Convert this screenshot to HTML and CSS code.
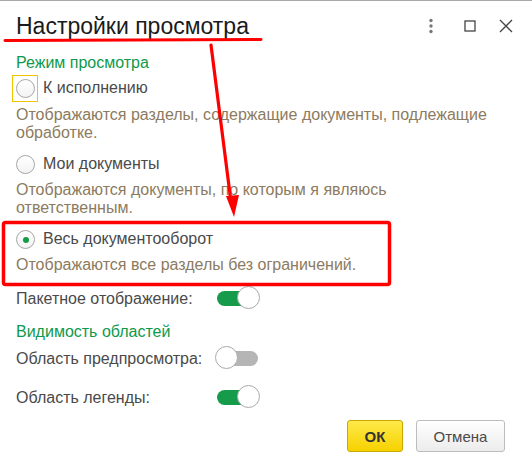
FILE: index.html
```html
<!DOCTYPE html>
<html lang="ru">
<head>
  <meta charset="UTF-8" />
  <title>Настройки просмотра</title>
  <link rel="stylesheet" href="styles.css">
</head>
<body>
  <div class="window">
    <header class="titlebar">
      <h1>Настройки просмотра</h1>
      <div class="win-buttons">
        <svg class="win-icon more" width="12" height="16" viewBox="0 0 12 16">
          <circle cx="6" cy="2.5" r="1.7" fill="#777" />
          <circle cx="6" cy="8" r="1.7" fill="#777" />
          <circle cx="6" cy="13.5" r="1.7" fill="#777" />
        </svg>
        <svg class="win-icon maximize" width="12" height="12" viewBox="0 0 12 12">
          <rect x="1" y="1" width="10" height="10" fill="none" stroke="#444" stroke-width="1.3" />
        </svg>
        <svg class="win-icon close" width="14" height="14" viewBox="0 0 14 14">
          <path d="M1 1L13 13M13 1L1 13" stroke="#444" stroke-width="1.3" />
        </svg>
      </div>
    </header>

    <main class="content">
      <div class="group-title">Режим просмотра</div>

      <label class="option focused">
        <span class="focus"><span class="radio"></span></span>
        <span class="option-text">К исполнению</span>
      </label>
      <p class="hint">Отображаются разделы, содержащие документы, подлежащие обработке.</p>

      <label class="option">
        <span class="radio"></span>
        <span class="option-text">Мои документы</span>
      </label>
      <p class="hint">Отображаются документы, по которым я являюсь ответственным.</p>

      <label class="option">
        <span class="radio checked"></span>
        <span class="option-text">Весь документооборот</span>
      </label>
      <p class="hint">Отображаются все разделы без ограничений.</p>

      <div class="switch-row first">
        <span class="switch-label">Пакетное отображение:</span>
        <span class="switch on"><span class="knob"></span></span>
      </div>

      <div class="group-title second">Видимость областей</div>

      <div class="switch-row preview">
        <span class="switch-label">Область предпросмотра:</span>
        <span class="switch"><span class="knob"></span></span>
      </div>

      <div class="switch-row legend">
        <span class="switch-label">Область легенды:</span>
        <span class="switch on"><span class="knob"></span></span>
      </div>
    </main>

    <footer class="actions">
      <button class="btn btn-ok">ОК</button>
      <button class="btn">Отмена</button>
    </footer>

    <!-- пометки поверх формы -->
    <svg class="marks" width="532" height="468" viewBox="0 0 532 468">
      <path d="M5 40.5L261 39.5" stroke="#f00" stroke-width="3" stroke-linecap="round" />
      <path d="M211 45L231 202" stroke="#f00" stroke-width="3.2" stroke-linecap="round" />
      <path d="M226 196L239 195L234 217Z" fill="#f00" />
      <rect x="3.5" y="222.5" width="386" height="62" rx="2" fill="none" stroke="#f00" stroke-width="3.5" />
    </svg>
  </div>
</body>
</html>
```

FILE: styles.css
```css
body {
  margin: 0;
  background: #ffffff;
  font-family: "Liberation Sans", Arial, sans-serif;
  color: #4a4a4a;
}
.window {
  position: relative;
  width: 532px;
  height: 468px;
  border-top: 1px solid #a8a8a8;
  box-sizing: border-box;
  overflow: hidden;
}
.titlebar {
  display: flex;
  align-items: center;
  justify-content: space-between;
  height: 50px;
  padding: 0 19px 0 16px;
}
.titlebar h1 {
  margin: 0;
  font-size: 23px;
  font-weight: 400;
  color: #1a1a1a;
}
.win-buttons {
  display: flex;
  align-items: center;
}
.win-icon.maximize {
  margin-left: 27px;
}
.win-icon.close {
  margin-left: 23px;
}
.content {
  padding: 0 28px 0 16px;
  font-size: 16px;
}
.group-title {
  color: #0e9a4a;
  height: 24px;
  line-height: 24px;
}
.group-title.second {
  margin-top: 9px;
}
.option {
  display: flex;
  align-items: center;
  height: 24px;
  gap: 8px;
}
.option.focused {
  height: 26px;
}
.focus {
  display: flex;
  align-items: center;
  justify-content: center;
  width: 24px;
  height: 25px;
  margin-left: -4px;
  margin-right: -3px;
  border: 1px solid #f2c300;
}
.radio {
  width: 19px;
  height: 19px;
  border-radius: 50%;
  border: 1px solid #a6a6a6;
  box-sizing: border-box;
  background: linear-gradient(#ffffff, #f3f3f3);
  position: relative;
}
.radio.checked::after {
  content: "";
  position: absolute;
  left: 6px;
  top: 6px;
  width: 6px;
  height: 6px;
  border-radius: 50%;
  background: #139b48;
}
.option-text {
  color: #4a4a4a;
}
.hint {
  margin: 5px 0 10px;
  line-height: 18px;
  color: #8c7b60;
}
.switch-row {
  display: flex;
  align-items: center;
  height: 25px;
}
.switch-row.first {
  margin-top: 12px;
}
.switch-row.preview {
  margin-top: 2px;
}
.switch-row.legend {
  margin-top: 14px;
}
.switch-label {
  width: 200px;
}
.switch {
  position: relative;
  width: 42px;
  height: 15px;
  border-radius: 8px;
  background: #b5b5b5;
}
.switch.on {
  background: #169b4b;
  margin-left: 1px;
}
.knob {
  position: absolute;
  top: -5px;
  left: -1px;
  width: 23px;
  height: 23px;
  border-radius: 50%;
  border: 1px solid #a9a9a9;
  background: #ffffff;
  box-sizing: border-box;
}
.switch.on .knob {
  left: auto;
  right: -1px;
}
.actions {
  position: absolute;
  left: 0;
  right: 0;
  top: 419px;
  display: flex;
  justify-content: flex-end;
  gap: 13px;
  padding-right: 27px;
}
.btn {
  height: 32px;
  min-width: 89px;
  padding: 0 12px;
  border: 1px solid #bdbdbd;
  border-radius: 3px;
  background: linear-gradient(#ffffff, #ececec);
  font-family: "Liberation Sans", Arial, sans-serif;
  font-size: 15px;
  color: #4a4a4a;
}
.btn-ok {
  min-width: 56px;
  font-weight: 700;
  color: #333333;
  border-color: #c9a800;
  background: linear-gradient(#ffe94a, #f6d200);
}
.marks {
  position: absolute;
  left: 0;
  top: -1px;
  pointer-events: none;
}
```
